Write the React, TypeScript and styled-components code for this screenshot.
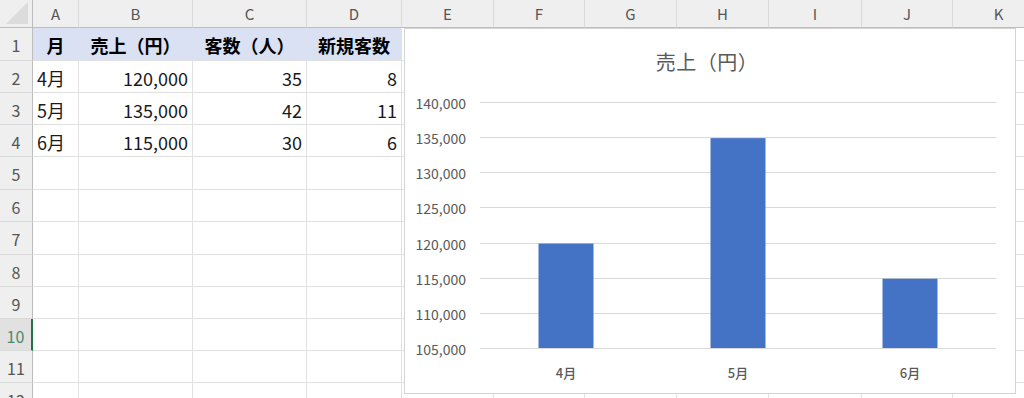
import React from 'react';
import styled, { createGlobalStyle } from 'styled-components';

const GlobalStyle = createGlobalStyle`
    html, body {
        margin: 0;
        padding: 0;
        background: #fff;
        overflow: hidden;
    }
    body {
        font-family: "Noto Sans CJK JP", "Noto Sans", sans-serif;
    }
`;

const COLS = ['A', 'B', 'C', 'D', 'E', 'F', 'G', 'H', 'I', 'J', 'K'];
const COL_WIDTHS = [46, 114, 114, 95, 92, 91, 92, 92, 93, 91, 92];
const ROW_HEIGHTS = [33, 32, 32, 32, 33, 32, 33, 32, 32, 32, 32, 32];
const ACTIVE_ROW = 10;

type Align = 'left' | 'right' | 'center';

const tableRows: { text: string; align: Align }[][] = [
    [
        { text: '月', align: 'center' },
        { text: '売上（円）', align: 'center' },
        { text: '客数（人）', align: 'center' },
        { text: '新規客数', align: 'center' }
    ],
    [
        { text: '4月', align: 'left' },
        { text: '120,000', align: 'right' },
        { text: '35', align: 'right' },
        { text: '8', align: 'right' }
    ],
    [
        { text: '5月', align: 'left' },
        { text: '135,000', align: 'right' },
        { text: '42', align: 'right' },
        { text: '11', align: 'right' }
    ],
    [
        { text: '6月', align: 'left' },
        { text: '115,000', align: 'right' },
        { text: '30', align: 'right' },
        { text: '6', align: 'right' }
    ]
];

const sales = [
    { label: '4月', value: 120000 },
    { label: '5月', value: 135000 },
    { label: '6月', value: 115000 }
];

const Sheet = styled.div`
    position: relative;
    width: 1024px;
    height: 398px;
    overflow: hidden;
`;

const Grid = styled.div`
    display: grid;
    grid-template-columns: 33px ${COL_WIDTHS.map((w) => `${w}px`).join(' ')};
    grid-template-rows: 28px ${ROW_HEIGHTS.map((h) => `${h}px`).join(' ')};
    width: max-content;
`;

const Corner = styled.div`
    position: relative;
    box-sizing: border-box;
    background: #efefef;
    border-right: 1px solid #bdbdbd;
    border-bottom: 1px solid #bdbdbd;

    &::after {
        content: '';
        position: absolute;
        right: 4px;
        bottom: 3px;
        width: 22px;
        height: 22px;
        background: #dcdcdc;
        clip-path: polygon(100% 0, 100% 100%, 0 100%);
    }
`;

const ColHeader = styled.div`
    box-sizing: border-box;
    display: flex;
    align-items: center;
    justify-content: center;
    background: #efefef;
    border-right: 1px solid #dadada;
    border-bottom: 1px solid #bdbdbd;
    color: #555;
    font-size: 15px;
    padding-bottom: 1px;
`;

const RowHeader = styled.div<{ $active?: boolean }>`
    box-sizing: border-box;
    display: flex;
    align-items: center;
    justify-content: center;
    background: ${(p) => (p.$active ? '#e1e1e1' : '#efefef')};
    border-bottom: 1px solid #dadada;
    border-right: ${(p) => (p.$active ? '2px solid #217346' : '1px solid #bdbdbd')};
    color: ${(p) => (p.$active ? '#4b8a6c' : '#555')};
    font-size: 16px;
    padding-top: 2px;
`;

const Cell = styled.div<{ $head?: boolean; $align?: Align }>`
    box-sizing: border-box;
    display: flex;
    align-items: center;
    justify-content: ${(p) =>
        p.$align === 'right' ? 'flex-end' : p.$align === 'center' ? 'center' : 'flex-start'};
    padding: 2px 4px 0 4px;
    background: ${(p) => (p.$head ? '#d9e1f2' : '#fff')};
    border-right: 1px solid ${(p) => (p.$head ? '#d9e1f2' : '#e1e1e1')};
    border-bottom: 1px solid #e1e1e1;
    color: ${(p) => (p.$head ? '#000' : '#1a1a1a')};
    font-size: 18px;
    font-weight: ${(p) => (p.$head ? 700 : 400)};
    white-space: nowrap;
    overflow: hidden;
`;

const ChartBox = styled.div`
    position: absolute;
    left: 404px;
    top: 28px;
    width: 612px;
    height: 366px;
    box-sizing: border-box;
    background: #fff;
    border: 1px solid #d4d4d4;
    display: flex;
    flex-direction: column;
`;

const ChartTitle = styled.div`
    height: 55px;
    display: flex;
    align-items: center;
    justify-content: center;
    padding-top: 9px;
    padding-right: 6px;
    box-sizing: border-box;
    color: #595959;
    font-size: 20px;
    letter-spacing: 0.5px;
`;

const Plot = styled.svg`
    display: block;
    font-family: "Noto Sans CJK JP", "Noto Sans", sans-serif;
`;

const MIN = 105000;
const MAX = 140000;
const STEP = 5000;
const PLOT_TOP = 19;
const PLOT_BOTTOM = 265;
const PLOT_LEFT = 75;
const PLOT_RIGHT = 591;

const yOf = (v: number) => PLOT_BOTTOM - ((v - MIN) / (MAX - MIN)) * (PLOT_BOTTOM - PLOT_TOP);

function SalesChart() {
    const ticks: number[] = [];
    for (let v = MAX; v >= MIN; v -= STEP) ticks.push(v);
    const band = (PLOT_RIGHT - PLOT_LEFT) / sales.length;
    const barWidth = 55;

    return (
        <ChartBox>
            <ChartTitle>売上（円）</ChartTitle>
            <Plot width={610} height={309} viewBox="0 0 610 309">
                {ticks.map((t) => (
                    <g key={t}>
                        <line
                            x1={PLOT_LEFT}
                            x2={PLOT_RIGHT}
                            y1={Math.round(yOf(t)) - 0.5}
                            y2={Math.round(yOf(t)) - 0.5}
                            stroke="#d9d9d9"
                            strokeWidth={1}
                        />
                        <text
                            x={61}
                            y={yOf(t)}
                            textAnchor="end"
                            dominantBaseline="central"
                            fontSize={14}
                            fill="#595959"
                        >
                            {t.toLocaleString('en-US')}
                        </text>
                    </g>
                ))}
                {sales.map((s, i) => {
                    const cx = PLOT_LEFT + band * i + band / 2;
                    const top = yOf(s.value);
                    return (
                        <g key={s.label}>
                            <rect
                                x={cx - barWidth / 2}
                                y={top}
                                width={barWidth}
                                height={PLOT_BOTTOM - 1 - top}
                                fill="#4472c4"
                            />
                            <text
                                x={cx}
                                y={288}
                                textAnchor="middle"
                                dominantBaseline="central"
                                fontSize={13}
                                fontWeight={500}
                                fill="#595959"
                            >
                                {s.label}
                            </text>
                        </g>
                    );
                })}
            </Plot>
        </ChartBox>
    );
}

export default function App() {
    return (
        <Sheet>
            <GlobalStyle />
            <Grid>
                <Corner />
                {COLS.map((c) => (
                    <ColHeader key={c}>{c}</ColHeader>
                ))}
                {ROW_HEIGHTS.map((_, r) => {
                    const rowNo = r + 1;
                    const data = tableRows[r];
                    return (
                        <React.Fragment key={rowNo}>
                            <RowHeader $active={rowNo === ACTIVE_ROW}>{rowNo}</RowHeader>
                            {COLS.map((c, ci) => {
                                const item = data && data[ci];
                                return (
                                    <Cell
                                        key={c}
                                        $head={rowNo === 1 && ci < 4}
                                        $align={item ? item.align : 'left'}
                                    >
                                        {item ? item.text : ''}
                                    </Cell>
                                );
                            })}
                        </React.Fragment>
                    );
                })}
            </Grid>
            <SalesChart />
        </Sheet>
    );
}
